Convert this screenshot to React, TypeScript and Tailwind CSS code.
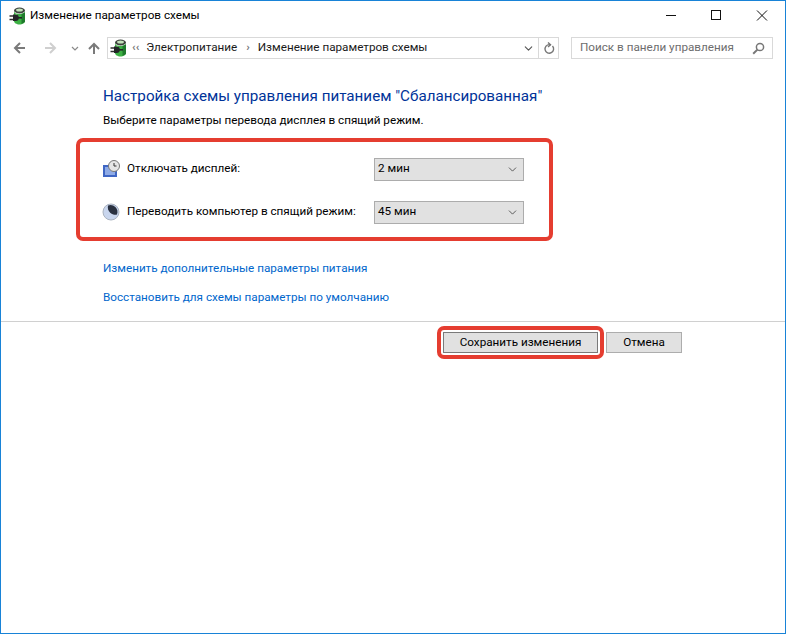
import { ChevronDown } from "lucide-react";

/* Green plug battery icon for the power options */
function PowerIcon({ className }: { className?: string }) {
  return (
    <svg className={className} width="18" height="18" viewBox="0 0 18 18">
      <ellipse cx="10.500" cy="3.500" rx="5.500" ry="3" fill="#3c423c" />
      <ellipse cx="10.500" cy="3" rx="3.400" ry="1.500" fill="#c4e2bb" />
      <path d="M5 4v10c0 1.800 2.500 3.500 5.500 3.500S16 15.800 16 14V4c0 1.800-2.500 3-5.500 3S5 5.800 5 4z" fill="#3cb043" />
      <path d="M12.500 7v10l3.500-2V5.500z" fill="#1f7a2c" />
      <path d="M7 6.500v3" stroke="#a8e6a2" strokeWidth="1.200" />
      <path d="M0.500 9h4M0.500 12.500h4" stroke="#2e2e2e" strokeWidth="1.300" />
      <path d="M4 7.500h2.500a3.300 3.300 0 0 1 0 6.600H4z" fill="#222426" />
      <path d="M9 10.800h4" stroke="#222426" strokeWidth="1.600" />
    </svg>
  );
}

function Select({ value }: { value: string }) {
  return (
    <div className="flex h-[23px] w-[150px] items-center justify-between border border-[#acacac] bg-[#e1e1e1] pl-[3px] pr-[4px] text-black">
      <span>{value}</span>
      <ChevronDown size={13} strokeWidth={1.400} className="text-[#333]" />
    </div>
  );
}

export default function App() {
  return (
    <div className="box-border flex h-[634px] w-[786px] flex-col border border-[#1883d7] bg-white text-[11.7px] text-[#1a1a1a] [font-family:'Roboto',sans-serif]">
      {/* title bar */}
      <div className="flex h-[30px] shrink-0 items-center pl-[8px]">
        <PowerIcon />
        <span className="ml-[3px] text-[11.7px] text-black">Изменение параметров схемы</span>
        <div className="ml-auto flex items-center">
          <svg width="150" height="30" viewBox="0 0 150 30" fill="none" stroke="#111" strokeWidth="1">
            <path d="M31 14.500h10" />
            <rect x="76.500" y="9.500" width="9" height="9" />
            <path d="M122 9.500l10 10M132 9.500l-10 10" />
          </svg>
        </div>
      </div>

      {/* navigation row */}
      <div className="mt-[6px] flex h-[22px] shrink-0 items-center">
        <svg width="106" height="22" viewBox="0 0 106 22" fill="none" strokeWidth="2">
          <path d="M24 11H14M19 6l-5 5 5 5" stroke="#7a7a7a" />
          <path d="M44 11h10M49 6l5 5-5 5" stroke="#cfcfcf" />
          <path d="M71 10l3 3 3-3" stroke="#8a8a8a" strokeWidth="1.200" />
          <path d="M93 17V7M88 12l5-5 5 5" stroke="#7a7a7a" />
        </svg>
        <div className="flex h-[22px] w-[452px] items-center border border-[#d9d9d9]">
          <PowerIcon className="ml-[2px]" />
          <span className="ml-[4px] font-bold text-[#777]">‹‹</span>
          <span className="ml-[7px]">Электропитание</span>
          <span className="ml-[9px] font-bold text-[#777]">›</span>
          <span className="ml-[8px]">Изменение параметров схемы</span>
          <ChevronDown size={13} strokeWidth={2} className="ml-auto mr-[3px] text-[#555]" />
          <div className="flex h-full w-[20px] items-center justify-center border-l border-[#d9d9d9]">
            <svg width="12" height="13" viewBox="0 0 12 13" fill="none" stroke="#777" strokeWidth="1.400">
              <path d="M9.500 4a4.300 4.300 0 1 1-3-1.400H8" />
              <path d="M5 0.500l2.500 2.200L5 5" />
            </svg>
          </div>
        </div>
        <div className="ml-[12px] flex h-[22px] w-[202px] items-center justify-between border border-[#d9d9d9] pl-[8px] pr-[7px] text-[#6d6d6d]">
          <span>Поиск в панели управления</span>
          <svg width="13" height="13" viewBox="0 0 13 13" fill="none" stroke="#777">
            <circle cx="8" cy="5" r="3.600" strokeWidth="1.500" />
            <path d="M5.400 7.600L1.200 11.800" strokeWidth="2" />
          </svg>
        </div>
      </div>

      {/* body */}
      <div className="mt-[27px] flex flex-col">
        <h1 className="ml-[102px] text-[15.2px] leading-[20px] text-[#003399]">
          Настройка схемы управления питанием "Сбалансированная"
        </h1>
        <p className="ml-[102px] mt-[6px] leading-[17px] text-black">Выберите параметры перевода дисплея в спящий режим.</p>

        <div className="ml-[75px] mt-[9px] box-border flex h-[103px] w-[477px] flex-col justify-center gap-[20px] rounded-[7px] border-[4px] border-[#e53d30] pl-[22px] pr-[24px] pt-[2px]">
          <div className="flex items-center">
            <svg width="18" height="18" viewBox="0 0 18 18">
              <path d="M1 5h14v12H1z" fill="#3f66c4" />
              <path d="M3 7h10v8H3z" fill="#8fabe6" />
              <circle cx="12" cy="6" r="5.500" fill="#e6e6e6" stroke="#777" />
              <path d="M12 3v3h2.500" stroke="#333" fill="none" />
            </svg>
            <span className="ml-[7px] w-[247px] text-black">Отключать дисплей:</span>
            <Select value="2 мин" />
          </div>
          <div className="flex items-center">
            <svg width="18" height="18" viewBox="0 0 18 18">
              <circle cx="9" cy="9" r="8" fill="#c9d6ee" stroke="#aab3c0" />
              <path d="M6 2.500a7 7 0 0 1 9 9A7.500 7.500 0 0 1 6 2.500z" fill="#2a3140" />
            </svg>
            <span className="ml-[7px] w-[247px] whitespace-nowrap text-black">Переводить компьютер в спящий режим:</span>
            <Select value="45 мин" />
          </div>
        </div>

        <a className="ml-[102px] mt-[19px] leading-[17px] text-[#0066cc]">Изменить дополнительные параметры питания</a>
        <a className="ml-[102px] mt-[12px] leading-[17px] text-[#0066cc]">Восстановить для схемы параметры по умолчанию</a>

        <div className="mt-[15px] h-px bg-[#d0d0d0]" />

        <div className="mt-[4px] flex items-center pl-[436px]">
          <div className="box-border flex h-[33px] w-[167px] items-center justify-center rounded-[7px] border-[4px] border-[#e53d30]">
            <button className="h-[21px] w-[155px] border border-[#7a7a7a] bg-[#e1e1e1] text-black">Сохранить изменения</button>
          </div>
          <button className="ml-[2px] h-[21px] w-[76px] border border-[#adadad] bg-[#e1e1e1] text-black">Отмена</button>
        </div>
      </div>
    </div>
  );
}
